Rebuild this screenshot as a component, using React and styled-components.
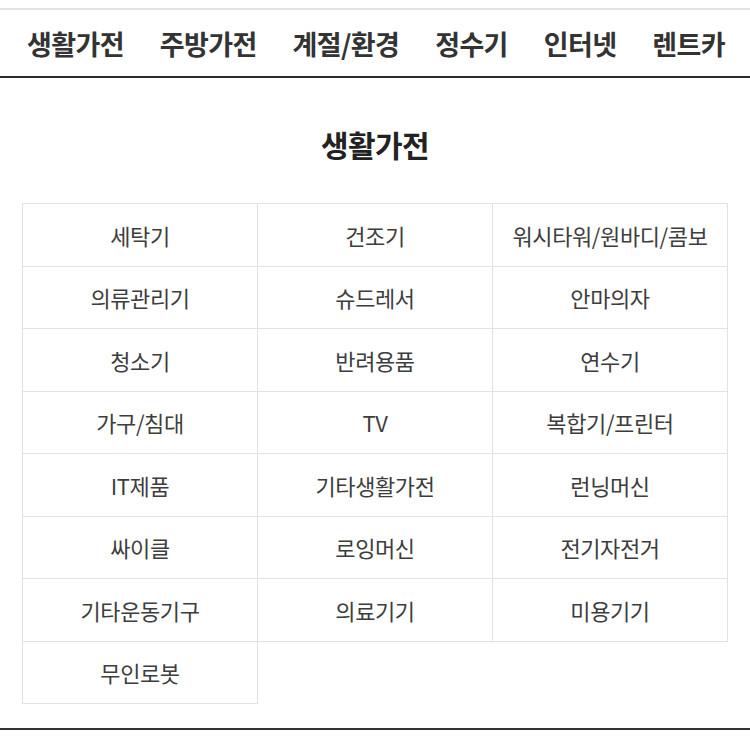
import React from 'react'
import styled, { createGlobalStyle } from 'styled-components'

const GlobalStyle = createGlobalStyle`
  html, body {
    margin: 0;
    padding: 0;
    background: #ffffff;
  }
  body {
    font-family: "Noto Sans CJK KR", "Noto Sans", sans-serif;
    color: #333333;
  }
`

const Page = styled.div`
  width: 750px;
  padding-top: 8px;
`

const Nav = styled.nav`
  display: flex;
  justify-content: space-between;
  align-items: center;
  height: 66px;
  padding: 0 25px 0 27px;
  border-top: 2px solid #e4e4e4;
  border-bottom: 2px solid #2a2a2a;
`

const NavItem = styled.a`
  font-size: 27px;
  font-weight: 700;
  color: #333333;
  letter-spacing: -0.6px;
  text-decoration: none;
  padding-top: 1px;
`

const Section = styled.section`
  padding: 0 22px 24px;
  border-bottom: 2px solid #333333;
`

const Title = styled.h2`
  box-sizing: border-box;
  margin: 0;
  height: 125px;
  padding-top: 6px;
  display: flex;
  align-items: center;
  justify-content: center;
  font-size: 30px;
  font-weight: 700;
  color: #222222;
  letter-spacing: -0.6px;
`

const Grid = styled.ul`
  list-style: none;
  margin: 0;
  padding: 0;
  display: grid;
  grid-template-columns: repeat(3, 1fr);
  border-top: 1px solid #e2e2e2;
  border-left: 1px solid #e2e2e2;
`

const Cell = styled.li`
  box-sizing: border-box;
  height: 62.5px;
  display: flex;
  align-items: center;
  justify-content: center;
  border-right: 1px solid #e2e2e2;
  border-bottom: 1px solid #e2e2e2;
  font-size: 22px;
  color: #3d3d3d;
  letter-spacing: -0.4px;
`

const tabs = ['생활가전', '주방가전', '계절/환경', '정수기', '인터넷', '렌트카']

const items = [
  '세탁기', '건조기', '워시타워/원바디/콤보',
  '의류관리기', '슈드레서', '안마의자',
  '청소기', '반려용품', '연수기',
  '가구/침대', 'TV', '복합기/프린터',
  'IT제품', '기타생활가전', '런닝머신',
  '싸이클', '로잉머신', '전기자전거',
  '기타운동기구', '의료기기', '미용기기',
  '무인로봇',
]

export default function App() {
  return (
    <Page>
      <GlobalStyle />
      <Nav>
        {tabs.map((t) => (
          <NavItem key={t}>{t}</NavItem>
        ))}
      </Nav>
      <Section>
        <Title>생활가전</Title>
        <Grid>
          {items.map((it) => (
            <Cell key={it}>{it}</Cell>
          ))}
        </Grid>
      </Section>
    </Page>
  )
}
